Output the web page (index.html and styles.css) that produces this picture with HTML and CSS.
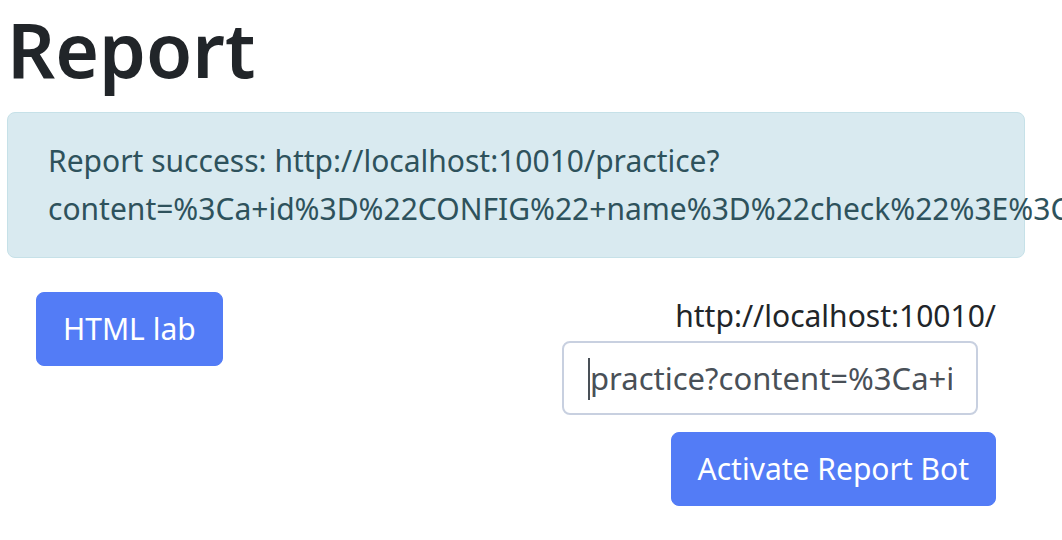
FILE: index.html
```html
<!DOCTYPE html>
<html lang="en">
<head>
<meta charset="utf-8">
<title>Report</title>
<link rel="stylesheet" href="styles.css">
</head>
<body>
<div class="page">
  <h1 class="title">Report</h1>
  <div class="alert">Report success: http://localhost:10010/practice?<wbr>content=%3Ca+id%3D%22CONFIG%22+name%3D%22check%22%3E%3C%2Fa%3E</div>
  <div class="row">
    <div class="left">
      <button class="btn" type="button">HTML lab</button>
    </div>
    <form class="report-form">
      <label class="prefix" for="url">http://localhost:10010/</label>
      <span class="field-wrap"><input class="field" id="url" type="text" value="practice?content=%3Ca+id%3D%22CONFIG%22"><span class="caret"></span></span>
      <button class="btn" type="button">Activate Report Bot</button>
    </form>
  </div>
</div>
</body>
</html>
```
FILE: styles.css
```css
html, body {
  margin: 0;
  padding: 0;
  overflow: hidden;
  background: #ffffff;
}
body {
  font-family: "Noto Sans", "Open Sans", sans-serif;
  font-size: 30px;
  line-height: 48px;
  color: #212529;
}
.page {
  width: 1018px;
  padding-left: 7px;
}
.title {
  margin: 0 0 16px 0;
  font-size: 75px;
  line-height: 98px;
  font-weight: 600;
  color: #212529;
}
.alert {
  box-sizing: border-box;
  width: 1018px;
  margin-top: -2px;
  padding: 24px 40px;
  margin-bottom: 32px;
  background: #d9eaf0;
  border: 1px solid #c6e1e8;
  border-radius: 8px;
  color: #2e525c;
  white-space: normal;
  overflow: visible;
}
.row {
  display: flex;
  justify-content: space-between;
  align-items: flex-start;
  padding: 0 29px;
}
.left {
  padding-top: 2px;
}
.btn {
  font-family: inherit;
  font-size: 30px;
  line-height: 48px;
  padding: 12px 26px;
  color: #ffffff;
  background: #537cf6;
  border: 1px solid #537cf6;
  border-radius: 8px;
}
.report-form {
  display: flex;
  flex-direction: column;
  align-items: flex-end;
}
.prefix {
  display: block;
  padding-top: 2px;
  color: #212529;
}
.field-wrap {
  position: relative;
  display: block;
  margin: 1px 18px 17px 0;
}
.field {
  display: block;
  box-sizing: border-box;
  width: 416px;
  height: 74px;
  padding: 12px 24px 12px 26px;
  font-family: inherit;
  font-size: 31px;
  line-height: 48px;
  color: #495057;
  background: #ffffff;
  border: 2px solid #c8d0e0;
  border-radius: 8px;
  outline: none;
}
.caret {
  position: absolute;
  left: 26px;
  top: 17px;
  width: 2px;
  height: 42px;
  background: #495057;
}
```
